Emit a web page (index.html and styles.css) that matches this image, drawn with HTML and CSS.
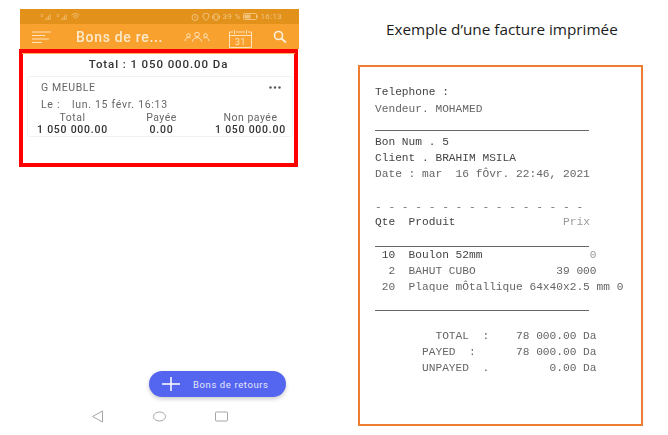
FILE: index.html
```html
<!DOCTYPE html>
<html lang="fr">
<head>
<meta charset="utf-8">
<title>Bons de retours</title>
<link rel="stylesheet" href="styles.css">
</head>
<body>
<main class="slide">
  <section class="phone">
    <div class="status">
      <div class="status-group">
        <svg class="sig" viewBox="0 0 14 8"><path d="M0 1h4M0 3h3" stroke="#f3c27c" fill="none"/><path d="M6 8V6h1v2zM8 8V4h1v4zM10 8V2h1v6zM12 8V0h1v8z" fill="#f3c27c"/></svg>
        <svg class="sig" viewBox="0 0 14 8"><path d="M0 1h4M0 3h3" stroke="#f3c27c" fill="none"/><path d="M6 8V6h1v2zM8 8V4h1v4zM10 8V2h1v6zM12 8V0h1v8z" fill="#f3c27c"/></svg>
        <svg class="wifi" viewBox="0 0 10 8"><path d="M.5 2.500a6.500 6.500 0 0 1 9 0M2 4.200a4.400 4.400 0 0 1 6 0M3.500 6a2 2 0 0 1 3 0" stroke="#f3c27c" fill="none"/></svg>
      </div>
      <div class="status-group status-right">
        <svg class="st" viewBox="0 0 8 8"><circle cx="4" cy="4.400" r="3" stroke="#f3c27c" fill="none"/><path d="M4 3v1.500h1.300" stroke="#f3c27c" fill="none" stroke-width=".7"/></svg>
        <svg class="st" viewBox="0 0 8 8"><path d="M4 7.500C2 5.500 1 4.400 1 3a3 3 0 0 1 6 0c0 1.400-1 2.500-3 4.500z" stroke="#f3c27c" fill="none"/></svg>
        <svg class="st" viewBox="0 0 8 8"><rect x="2" y="1" width="4" height="6" rx=".5" stroke="#f3c27c" fill="none"/><path d="M.5 2.500v3M7.500 2.500v3" stroke="#f3c27c"/></svg>
        <span>39 %</span>
        <svg class="batt" viewBox="0 0 15 7"><rect x=".5" y=".5" width="13" height="6" rx="1" stroke="#f3c27c" fill="none"/><rect x="1.500" y="1.500" width="6" height="4" fill="#f3c27c"/><path d="M14.500 2.500v2" stroke="#f3c27c"/></svg>
        <span>16:13</span>
      </div>
    </div>
    <header class="appbar">
      <svg class="menu" viewBox="0 0 20 12"><path d="M0 1h19M0 4.500h13M0 8h17M0 11.500h10" stroke="#fde3bd" stroke-width="1" fill="none"/></svg>
      <h1 class="app-title">Bons de re...</h1>
      <svg class="people" viewBox="0 0 26 12"><g stroke="#fde3bd" fill="none"><circle cx="13" cy="3.500" r="2.300"/><path d="M8.500 10.500c0-5 9-5 9 0"/><circle cx="4.500" cy="4.500" r="1.800"/><path d="M1 10c0-3.500 4-4 5.500-3"/><circle cx="21.500" cy="4.500" r="1.800"/><path d="M25 10c0-3.500-4-4-5.500-3"/></g></svg>
      <div class="cal">
        <svg class="cal-frame" viewBox="0 0 25 20"><path d="M5 3H1.500v15.500h22V3H20M8 3h9M1.500 6.500h22M6.500 1v4M18.500 1v4" stroke="#fde3bd" fill="none"/></svg>
        <span class="cal-num">31</span>
      </div>
      <svg class="search" viewBox="0 0 14 14"><circle cx="5.500" cy="5.500" r="4" stroke="#fdf0dc" stroke-width="1.600" fill="none"/><path d="M8.500 8.500l4.500 4" stroke="#fdf0dc" stroke-width="1.800" fill="none"/></svg>
    </header>
    <div class="highlight">
      <div class="strip"></div>
      <p class="grand-total">Total : 1 050 000.00 Da</p>
      <article class="card">
        <div class="card-head">
          <span>G MEUBLE</span>
          <svg class="dots" viewBox="0 0 12 3"><circle cx="1.500" cy="1.500" r="1.200" fill="#555"/><circle cx="6" cy="1.500" r="1.200" fill="#555"/><circle cx="10.500" cy="1.500" r="1.200" fill="#555"/></svg>
        </div>
        <div class="card-date"><span class="le">Le :</span><span>lun. 15 févr. 16:13</span></div>
        <div class="amounts">
          <div class="amount"><span>Total</span><strong>1 050 000.00</strong></div>
          <div class="amount"><span>Payée</span><strong>0.00</strong></div>
          <div class="amount"><span>Non payée</span><strong>1 050 000.00</strong></div>
        </div>
      </article>
    </div>
    <button class="fab">
      <svg class="plus" viewBox="0 0 18 14"><path d="M0 7h18M9 0v14" stroke="#fff" stroke-width="1.500"/></svg>
      <span>Bons de retours</span>
    </button>
    <nav class="nav">
      <svg class="nav-ic" viewBox="0 0 13 13"><path d="M1.500 6.500L11.500 1v11z" stroke="#a6a6a6" fill="none"/></svg>
      <svg class="nav-ic" viewBox="0 0 13 13"><ellipse cx="6.500" cy="6.500" rx="6" ry="4.500" stroke="#a6a6a6" fill="none"/></svg>
      <svg class="nav-ic" viewBox="0 0 13 13"><rect x=".5" y="2" width="12" height="9" rx="1" stroke="#a6a6a6" fill="none"/></svg>
    </nav>
  </section>

  <section class="example">
    <h2 class="example-title">Exemple d’une facture imprimée</h2>
    <div class="receipt">
      <div class="r-contact">
        <div class="ln">Telephone :</div>
        <div class="ln faint">Vendeur. MOHAMED</div>
      </div>
      <div class="r-rule r-rule-a"></div>
      <div class="r-meta">
        <div class="ln">Bon Num . 5</div>
        <div class="ln">Client . BRAHIM MSILA</div>
        <div class="ln faint">Date : mar  16 fÔvr. 22:46, 2021</div>
      </div>
      <div class="ln r-dashes">- - - - - - - - - - - - - - - -</div>
      <div class="ln r-head">Qte  Produit                <span class="fainter">Prix</span></div>
      <div class="r-rule r-rule-b"></div>
      <div class="r-items">
        <div class="ln"> 10  Boulon 52mm                <span class="fainter">0</span></div>
        <div class="ln faint">  2  BAHUT CUBO            39 000</div>
        <div class="ln faint"> 20  Plaque mÔtallique 64x40x2.5 mm 0</div>
      </div>
      <div class="r-rule r-rule-c"></div>
      <div class="r-totals faint">
        <div class="ln">         TOTAL  :    78 000.00 Da</div>
        <div class="ln">       PAYED  :      78 000.00 Da</div>
        <div class="ln">       UNPAYED  .         0.00 Da</div>
      </div>
    </div>
  </section>
</main>
</body>
</html>
```
FILE: styles.css
```css
* { box-sizing: border-box; }
html, body { margin: 0; padding: 0; background: #fff; }
.slide { width: 668px; height: 435px; display: flex; overflow: hidden; }

/* phone capture */
.phone {
  width: 279px; margin-left: 19px; padding-top: 9px;
  display: flex; flex-direction: column;
  font-family: Roboto, "Liberation Sans", sans-serif;
}
.status {
  height: 15px; margin-left: 1px; margin-right: -1px; padding: 0 17px 0 19px;
  background: #e2921b; color: #f3c27c; font-size: 8px; letter-spacing: .3px;
  display: flex; justify-content: space-between; align-items: center;
  filter: blur(.4px);
}
.status-group { display: flex; align-items: center; gap: 2px; }
.status-right { gap: 2.500px; }
.sig { width: 14px; height: 6px; }
.wifi { width: 9px; height: 7px; }
.st { width: 8px; height: 8px; }
.batt { width: 15px; height: 7px; }

.appbar {
  height: 25px; margin-left: 1px; margin-right: -1px; padding: 1px 0 0 12px;
  background: #f9a12f; display: flex; align-items: center;
}
.menu { width: 20px; height: 12px; flex: none; }
.app-title {
  margin: 0 0 0 24px; width: 108px; flex: none; white-space: nowrap;
  font-size: 14px; font-weight: 500; letter-spacing: .7px; color: #fdeacb;
  filter: blur(.3px);
}
.people { width: 26px; height: 12px; flex: none; }
.cal { position: relative; width: 25px; height: 20px; margin: 3px 0 0 18px; flex: none; }
.cal-frame { display: block; width: 25px; height: 20px; }
.cal-num {
  position: absolute; left: 0; right: 0; bottom: 1px; text-align: center;
  font-size: 9px; line-height: 12px; color: #fde3bd; letter-spacing: .5px;
}
.search { width: 14px; height: 14px; margin-left: 20px; flex: none; }

.highlight {
  height: 118px; border: 4px solid #fe0000; background: #fff;
  display: flex; flex-direction: column;
}
.strip { height: 1px; margin: 0 -1px; background: #f6b462; }
.grand-total {
  margin: 0; height: 21px; line-height: 20px; text-align: center;
  font-size: 11.500px; font-weight: 500; color: #333; letter-spacing: .9px;
  filter: blur(.3px);
}
.card {
  height: 61px; margin: 1px 1px 0 4px; padding: 4px 0 0 13px;
  border: 1px solid #f2f2f2; border-radius: 3px; color: #666;
  font-size: 10.500px; filter: blur(.3px);
}
.card-head { display: flex; justify-content: space-between; align-items: center; height: 12px; padding-right: 11px; letter-spacing: .6px; }
.dots { width: 12px; height: 3px; }
.card-date { display: flex; margin-top: 5px; height: 12px; align-items: center; letter-spacing: .7px; }
.le { width: 31px; }
.amounts { display: grid; grid-template-columns: 89px 89px 89px; margin: 2px 0 0 -13px; }
.amount { display: flex; flex-direction: column; align-items: center; line-height: 12px; letter-spacing: .5px; white-space: nowrap; }
.amount strong { font-weight: 500; color: #333; letter-spacing: .75px; }

.fab {
  align-self: flex-end; width: 137px; height: 26px; margin: 204px 12px 0 0; padding: 0 0 0 13px;
  border: 0; border-radius: 13px; background: #5465f0; color: #e6e8fd;
  box-shadow: 0 2px 4px rgba(0,0,0,.2);
  display: flex; align-items: center; gap: 13px;
  font: 400 9.500px Roboto, "Liberation Sans", sans-serif; letter-spacing: .6px;
}
.plus { width: 18px; height: 14px; flex: none; }
.nav { display: flex; gap: 49px; margin-top: 13px; padding-left: 72px; }
.nav-ic { width: 13px; height: 13px; }

/* printed invoice */
.example { margin-left: 60px; padding-top: 20px; width: 285px; }
.example-title {
  margin: 0 0 0 28px; height: 18px; white-space: nowrap;
  font: 400 15.300px/18px "Open Sans", "Liberation Sans", sans-serif; color: #1c1c1c;
}
.receipt {
  height: 361px; margin-top: 27px; padding: 17px 0 0 15px;
  border: 2px solid #ed7d31; background: #fff;
  font: 11.200px/16px "Liberation Mono", monospace; color: #444;
  filter: blur(.35px);
}
.ln { white-space: pre; height: 16px; }
.faint { color: #666; }
.fainter { color: #999; }
.r-contact { display: flex; flex-direction: column; gap: 1px; }
.r-rule { width: 214px; height: 1px; background: #666; }
.r-rule-a { margin-top: 13px; }
.r-rule-b { margin-top: 16px; }
.r-rule-c { margin-top: 15px; }
.r-meta { margin-top: 3px; }
.r-dashes { margin-top: 17px; color: #777; }
.r-head { margin-top: -1px; }
.r-totals { margin-top: 17px; }
```
